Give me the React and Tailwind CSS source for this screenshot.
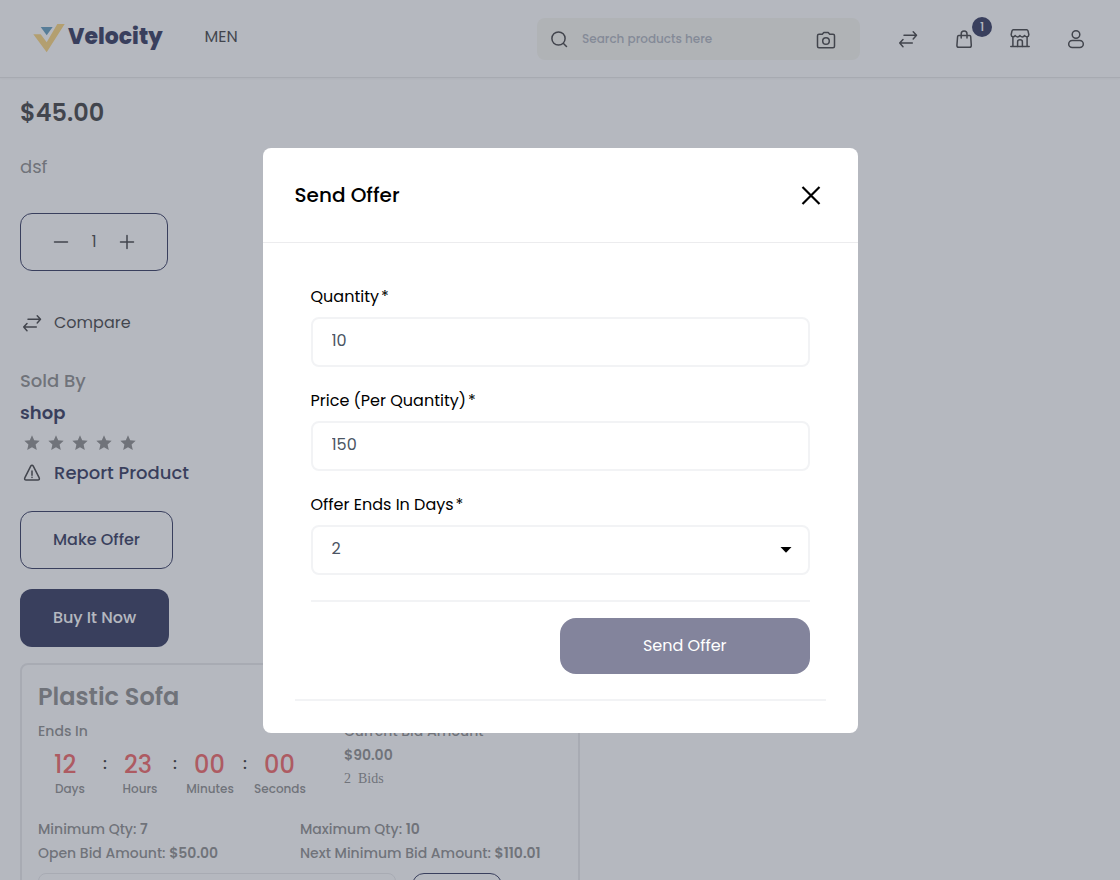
import React from "react";

function Icon({ children, className = "size-6" }) {
  return (
    <svg
      viewBox="0 0 24 24"
      fill="none"
      stroke="currentColor"
      strokeWidth="1.5"
      strokeLinecap="round"
      strokeLinejoin="round"
      aria-hidden="true"
      className={className}
    >
      {children}
    </svg>
  );
}

const CompareIcon = () => (
  <Icon>
    <path d="M8 8.3H20.300M17.200 4.700l3.300 3.600-3.300 3.600M16.300 16.100H3.700M7 12.500l-3.300 3.600L7 19.700" />
  </Icon>
);

const BagIcon = () => (
  <Icon>
    <path d="M6.700 8.500h10.900q1 0 1.100 1l.6 9q0 1.800-1.800 1.800H6.700q-1.800 0-1.800-1.800l.7-9q.1-1 1.100-1z" />
    <path d="M9.200 11V7a2.900 2.900 0 0 1 5.800 0v4" />
  </Icon>
);

const StoreIcon = () => (
  <Icon>
    <path d="M2.800 19.500h18.400M4.900 10v9.500M19.100 10v9.500" />
    <path d="M5.300 2.800h13.400q1 0 1.300 1.100l.8 3.400q.2 2.200-1.700 2.500-1.600.1-2.400-1.300-.9 1.400-2.400 1.400T12 8.500q-.9 1.400-2.400 1.400T7.300 8.500q-.9 1.400-2.400 1.300-1.900-.3-1.700-2.500L4 3.900q.3-1.100 1.300-1.100z" />
    <path d="M9.600 19.500v-4.700q0-2 2.400-2t2.400 2v4.700" />
  </Icon>
);

const UserIcon = () => (
  <Icon>
    <circle cx="12" cy="7.500" r="3.800" />
    <rect x="4.700" y="13.500" width="14.600" height="7" rx="3.500" />
  </Icon>
);

const CameraIcon = () => (
  <Icon>
    <path d="M8.300 7.300 9.800 5.600h4.400l1.500 1.700H19q1.500 0 1.500 1.500v10.400q0 1.500-1.500 1.500H5q-1.500 0-1.500-1.500V8.800q0-1.500 1.500-1.500z" />
    <circle cx="12" cy="14" r="3.300" />
  </Icon>
);

const StarIcon = () => (
  <svg viewBox="0 0 24 24" fill="currentColor" aria-hidden="true" className="size-6">
    <path d="m12 4.300 2.200 5 5.500.5-4.100 3.600 1.200 5.600L12 16.200l-4.800 2.800 1.200-5.600-4.100-3.600 5.500-.5z" />
  </svg>
);

function Header() {
  return (
    <header className="flex h-[78px] items-center justify-between border-b border-[#e2e2e2] px-8 shadow-xs">
      <div className="flex items-center gap-[42px] pb-1">
        <a href="#" className="flex items-center gap-[2px] text-[#060c3b]">
          <svg viewBox="0 0 34 32" aria-hidden="true" className="h-8 w-[34px]">
            <path d="M1.300 13.300h7.400l6 8L25.300 3h7.400L14.700 31.300z" fill="#f9c650" opacity=".9" />
            <path d="M8.700 6h12l-6 8.300z" fill="#2f7ba8" opacity=".9" />
          </svg>
          <span className="text-[22px] font-extrabold">Velocity</span>
        </a>
        <a href="#" className="text-base">MEN</a>
      </div>
      <div className="flex items-center gap-9">
        <div className="flex h-[42px] w-[323px] items-center rounded-lg bg-[#f5f4ed] pl-2.5 pr-[22px]">
          <Icon>
            <circle cx="11.500" cy="11.500" r="6.600" />
            <path d="m16.500 16.500 3 3" />
          </Icon>
          <input
            type="text"
            aria-label="Search products here"
            placeholder="Search products here"
            className="ml-[11px] min-w-0 flex-1 bg-transparent text-xs font-medium outline-none placeholder:text-[#9ca3af]"
          />
          <button type="button" aria-label="Search by image"><CameraIcon /></button>
        </div>
        <nav className="flex items-center gap-8">
          <button type="button" aria-label="Compare"><CompareIcon /></button>
          <button type="button" aria-label="Cart" className="relative">
            <BagIcon />
            <span className="absolute -top-2.5 left-5 flex size-5 items-center justify-center rounded-full bg-[#060c3b] text-xs font-medium text-white">
              1
            </span>
          </button>
          <button type="button" aria-label="Store"><StoreIcon /></button>
          <button type="button" aria-label="Account"><UserIcon /></button>
        </nav>
      </div>
    </header>
  );
}

const countdown = [
  ["12", "Days"],
  ["23", "Hours"],
  ["00", "Minutes"],
  ["00", "Seconds"],
];

function AuctionCard() {
  return (
    <section className="mt-4 w-[560px] rounded-lg border-2 border-[#e4e4e7] p-4 text-sm font-medium text-[#757575]">
      <h2 className="text-2xl font-semibold">Plastic Sofa</h2>
      <div className="mt-1.5 flex gap-8">
        <div>
          <p className="leading-6">Ends In</p>
          <div className="mt-[7px] flex">
            {countdown.map(([value, unit], i) => (
              <React.Fragment key={unit}>
                {i > 0 && <span className="w-1.5 text-center text-base leading-7 text-black">:</span>}
                <div className="flex w-16 flex-col">
                  <span className="pl-4 text-2xl leading-[30px] font-medium text-[#ef4444]">{value}</span>
                  <span className="text-center text-xs leading-[18px]">{unit}</span>
                </div>
              </React.Fragment>
            ))}
          </div>
        </div>
        <div className="leading-6">
          <p>Current Bid Amount</p>
          <p className="font-semibold">$90.00</p>
          <p className="whitespace-pre font-['Liberation_Serif',serif] font-normal">2  Bids</p>
        </div>
      </div>
      <div className="mt-[19px] grid grid-cols-2 leading-6">
        <p>Minimum Qty: <b className="font-semibold">7</b></p>
        <p>Maximum Qty: <b className="font-semibold">10</b></p>
        <p>Open Bid Amount: <b className="font-semibold">$50.00</b></p>
        <p className="whitespace-nowrap">Next Minimum Bid Amount: <b className="font-semibold">$110.01</b></p>
      </div>
      <div className="mt-2 flex gap-4">
        <input type="text" aria-label="Bid amount" className="h-12 w-[358px] rounded-lg border border-[#e4e4e7] px-4" />
        <button type="button" aria-label="Place bid" className="h-12 w-[90px] rounded-xl border border-[#060c3b]" />
      </div>
    </section>
  );
}

function Product() {
  return (
    <main className="flex flex-col items-start px-5 pt-[17px]">
      <p className="text-2xl leading-9 font-semibold">$45.00</p>
      <p className="mt-[22px] text-lg leading-7 text-[#757575]">dsf</p>
      <div className="mt-8 flex h-[58px] w-[148px] items-center justify-center gap-[18px] rounded-xl border border-[#060c3b]">
        <button type="button" aria-label="Decrease quantity"><Icon><path d="M5.500 12h13" /></Icon></button>
        <span className="text-base">1</span>
        <button type="button" aria-label="Increase quantity"><Icon><path d="M5.500 12h13M12 5.500v13" /></Icon></button>
      </div>
      <button type="button" className="mt-10 flex items-center gap-2.5 text-base"><CompareIcon />Compare</button>
      <p className="mt-8 text-lg leading-7 font-medium text-[#757575]">Sold By</p>
      <a href="#" className="mt-1 text-lg leading-7 font-semibold text-[#060c3b]">shop</a>
      <div className="mt-1 flex text-[#757575]">
        <StarIcon /><StarIcon /><StarIcon /><StarIcon /><StarIcon />
      </div>
      <a href="#" className="mt-1 flex items-center gap-2.5 text-lg leading-7 font-medium text-[#060c3b]">
        <span className="text-[#18181b]">
          <Icon>
            <path d="M10.600 5.300q1.400-2 2.800 0l5.700 11.300q1 2.400-1.300 2.400H6.200q-2.300 0-1.300-2.400z" />
            <path d="M12 10v4.200M12 16.200v.2" />
          </Icon>
        </span>
        Report Product
      </a>
      <button type="button" className="mt-6 h-[58px] w-[153px] rounded-xl border border-[#060c3b] text-base font-medium text-[#060c3b]">
        Make Offer
      </button>
      <button type="button" className="mt-5 h-[58px] w-[149px] rounded-xl bg-[#060c3b] text-base font-medium text-white">
        Buy It Now
      </button>
      <AuctionCard />
    </main>
  );
}

function Field({ id, label, children }) {
  return (
    <div className="mb-[22px]">
      <label htmlFor={id} className="mb-2 flex gap-[2px] text-base">
        {label}
        <span>*</span>
      </label>
      {children}
    </div>
  );
}

const control =
  "h-[50px] w-full appearance-none rounded-lg border-2 border-[#f2f3f5] bg-white px-[19px] pb-[2px] text-base text-[#4b5563] outline-none";

function OfferDialog() {
  return (
    <div className="fixed inset-0 flex items-center justify-center bg-[#6b7280]/50 px-4">
      <div
        role="dialog"
        aria-modal="true"
        aria-labelledby="offer-title"
        className="w-full max-w-[595px] rounded-lg bg-white text-black"
      >
        <div className="flex items-center justify-between border-b border-[#ececee] px-8 py-[31px]">
          <h1 id="offer-title" className="text-xl leading-8 font-medium">Send Offer</h1>
          <button type="button" aria-label="Close">
            <svg viewBox="0 0 30 30" fill="none" stroke="currentColor" strokeWidth="2.200" aria-hidden="true" className="size-[30px]">
              <path d="m6.500 7 17 17m0-17-17 17" />
            </svg>
          </button>
        </div>
        <div className="p-8">
          <form className="border-b-2 border-[#f2f3f5] px-4 pt-2.5 pb-[25px]" onSubmit={(e) => e.preventDefault()}>
            <Field id="quantity" label="Quantity">
              <input id="quantity" type="text" defaultValue="10" className={control} />
            </Field>
            <Field id="price" label="Price (Per Quantity)">
              <input id="price" type="text" defaultValue="150" className={control} />
            </Field>
            <Field id="days" label="Offer Ends In Days">
              <div className="relative">
                <select id="days" defaultValue="2" className={control}>
                  <option>1</option>
                  <option>2</option>
                  <option>3</option>
                </select>
                <svg viewBox="0 0 12 6" aria-hidden="true" className="pointer-events-none absolute top-[22px] right-[18px] h-1.5 w-3">
                  <path d="M.500 0h11L6 5.800z" />
                </svg>
              </div>
            </Field>
            <div className="mt-[25px] flex justify-end border-t-2 border-[#f2f3f5] pt-4">
              <button type="submit" className="h-14 w-1/2 rounded-2xl bg-[#83849c] text-base text-white">
                Send Offer
              </button>
            </div>
          </form>
        </div>
      </div>
    </div>
  );
}

export default function App() {
  return (
    <div className="h-screen overflow-hidden bg-white font-[Poppins,Inter,sans-serif] text-[#18181b]">
      <Header />
      <Product />
      <OfferDialog />
    </div>
  );
}
